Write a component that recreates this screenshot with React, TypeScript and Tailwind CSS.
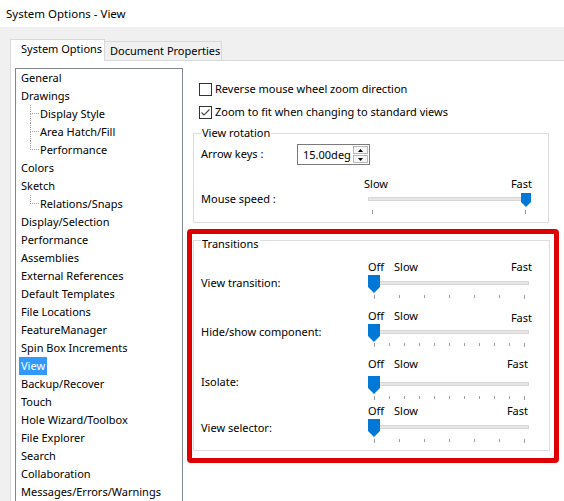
import React from 'react';

interface TreeItem {
  label: string;
  child?: boolean;
  last?: boolean;
  selected?: boolean;
}

const treeItems: TreeItem[] = [
  { label: 'General' },
  { label: 'Drawings' },
  { label: 'Display Style', child: true },
  { label: 'Area Hatch/Fill', child: true },
  { label: 'Performance', child: true, last: true },
  { label: 'Colors' },
  { label: 'Sketch' },
  { label: 'Relations/Snaps', child: true, last: true },
  { label: 'Display/Selection' },
  { label: 'Performance' },
  { label: 'Assemblies' },
  { label: 'External References' },
  { label: 'Default Templates' },
  { label: 'File Locations' },
  { label: 'FeatureManager' },
  { label: 'Spin Box Increments' },
  { label: 'View', selected: true },
  { label: 'Backup/Recover' },
  { label: 'Touch' },
  { label: 'Hole Wizard/Toolbox' },
  { label: 'File Explorer' },
  { label: 'Search' },
  { label: 'Collaboration' },
  { label: 'Messages/Errors/Warnings' },
];

interface TransitionRowDef {
  label: string;
  ticks: number;
  rowMt: string;
  labelPt: string;
  thumbMt: string;
  tickMt: string;
  fastCls: string;
}

const transitionRows: TransitionRowDef[] = [
  { label: 'View transition:', ticks: 7, rowMt: 'mt-0', labelPt: 'pt-[16px]', thumbMt: 'mt-[1px]', tickMt: 'mt-[2px]', fastCls: 'pr-[2px]' },
  { label: 'Hide/show component:', ticks: 11, rowMt: 'mt-[10px]', labelPt: 'pt-[16px]', thumbMt: 'mt-[1px]', tickMt: 'mt-[1px]', fastCls: 'pr-[2px] pt-[2px]' },
  { label: 'Isolate:', ticks: 11, rowMt: 'mt-[10px]', labelPt: 'pt-[18px]', thumbMt: 'mt-[5px]', tickMt: 'mt-[2px]', fastCls: 'pr-[6px]' },
  { label: 'View selector:', ticks: 7, rowMt: 'mt-[4px]', labelPt: 'pt-[17px]', thumbMt: 'mt-[1px]', tickMt: 'mt-[2px]', fastCls: 'pr-[6px]' },
];

const Thumb = ({ w, h, className }: { w: number; h: number; className: string }) => (
  <svg width={w} height={h} viewBox={`0 0 ${w} ${h}`} className={className}>
    <path d={`M0 0 H${w} V${h - w / 2} L${w / 2} ${h} L0 ${h - w / 2} Z`} fill="#0078d7" />
  </svg>
);

const Ticks = ({ count }: { count: number }) => (
  <>
    {Array.from({ length: count }).map((_, i) => (
      <span
        key={i}
        className={i === 0 || i === count - 1 ? 'h-[4px] w-px bg-[#a0a0a0]' : 'h-[3px] w-px bg-[#a0a0a0]'}
      />
    ))}
  </>
);

const Checkbox = ({ checked, label, mt }: { checked?: boolean; label: string; mt: string }) => (
  <div className={`ml-[12px] flex h-[16px] items-center gap-[3px] ${mt}`}>
    <span className="flex h-[13px] w-[13px] items-center justify-center border border-[#333333] bg-white">
      {checked && (
        <svg width="11" height="11" viewBox="0 0 11 11">
          <path d="M1.5 5.5 L4 8 L9.5 2.5" fill="none" stroke="#444444" strokeWidth="1.1" />
        </svg>
      )}
    </span>
    <span className="whitespace-nowrap leading-[16px]">{label}</span>
  </div>
);

const SpinArrow = ({ up }: { up?: boolean }) => (
  <svg width="5" height="3" viewBox="0 0 5 3">
    <path d={up ? 'M0 3 L2.5 0 L5 3 Z' : 'M0 0 L2.5 3 L5 0 Z'} fill="#000" />
  </svg>
);

const TransitionRow = ({ row }: { row: TransitionRowDef }) => (
  <div className={`flex ${row.rowMt}`}>
    <div className={`w-[172px] pl-[7px] leading-[14px] ${row.labelPt}`}>{row.label}</div>
    <div className="w-[168px]">
      <div className="flex h-[14px] pl-[2px] leading-[14px]">
        <span className="w-[26px]">Off</span>
        <span>Slow</span>
        <span className={`ml-auto ${row.fastCls}`}>Fast</span>
      </div>
      <div className={`relative h-[18px] ${row.thumbMt}`}>
        <div className="ml-[4px] w-[159px] pt-[6px]">
          <div className="h-[4px] border border-[#d6d6d6] bg-[#e7e7e7]" />
        </div>
        <Thumb w={12} h={18} className="absolute left-[2px] top-0" />
      </div>
      <div className={`ml-[8px] flex w-[151px] items-start justify-between ${row.tickMt}`}>
        <Ticks count={row.ticks} />
      </div>
    </div>
  </div>
);

export default function App() {
  return (
    <div className="flex h-[501px] w-[564px] flex-col overflow-hidden bg-[#f0f0f0] font-['Noto_Sans',sans-serif] text-[11px] text-black">
      {/* title bar */}
      <div className="flex h-[27px] shrink-0 items-center bg-white pl-[6px] text-[11.5px]">System Options - View</div>

      {/* tabs */}
      <div className="ml-[10px] mt-[12px] flex h-[21px] shrink-0 items-start whitespace-nowrap">
        <div className="relative z-10 h-[22px] w-[95px] border border-b-0 border-[#d9d9d9] bg-white pl-[10px] pt-[2px] leading-[14px]">
          System Options
        </div>
        <div className="mt-[2px] h-[19px] w-[117px] border border-l-0 border-b-0 border-[#d9d9d9] bg-[#f0f0f0] pl-[5px] pt-[2px] leading-[14px]">
          Document Properties
        </div>
      </div>

      {/* panel */}
      <div className="ml-[10px] flex flex-1 border-l border-t border-[#d9d9d9] bg-white">
        {/* tree */}
        <div className="ml-[4px] mt-[7px] h-[450px] w-[168px] shrink-0 border border-[#828790] bg-white">
          {treeItems.map((item, i) => (
            <div key={i} className="flex h-[18px] items-center whitespace-nowrap leading-[18px]">
              {item.child ? (
                <>
                  <span className="ml-[14px] flex h-full w-[9px] flex-col">
                    <span className="h-[9px] border-b border-l border-dotted border-[#a0a0a0]" />
                    <span className={item.last ? 'flex-1' : 'flex-1 border-l border-dotted border-[#a0a0a0]'} />
                  </span>
                  <span className="ml-px">{item.label}</span>
                </>
              ) : item.selected ? (
                <span className="ml-[3px] bg-[#3399ff] px-[2px] text-white">{item.label}</span>
              ) : (
                <span className="pl-[5px]">{item.label}</span>
              )}
            </div>
          ))}
        </div>

        {/* options */}
        <div className="flex flex-col pl-[4px]">
          <Checkbox label="Reverse mouse wheel zoom direction" mt="mt-[20px]" />
          <Checkbox checked label="Zoom to fit when changing to standard views" mt="mt-[7px]" />

          {/* view rotation */}
          <div className="relative ml-[6px] mt-[13px] w-[356px] border border-[#dcdcdc] pb-[8px]">
            <span className="absolute left-[7px] -top-[8px] bg-white px-px leading-[14px]">View rotation</span>
            <div className="mt-[10px] flex h-[21px] items-center">
              <span className="w-[103px] pl-[7px]">Arrow keys :</span>
              <div className="flex h-[21px] w-[73px] border border-[#7a7a7a] bg-white">
                <span className="flex-1 pl-[5px] leading-[19px]">15.00deg</span>
                <div className="flex w-[16px] flex-col gap-px py-px pr-px">
                  <span className="flex h-[8px] items-center justify-center border border-[#b9b9b9] bg-[#f7f7f7]">
                    <SpinArrow up />
                  </span>
                  <span className="flex h-[8px] items-center justify-center border border-[#b9b9b9] bg-[#f7f7f7]">
                    <SpinArrow />
                  </span>
                </div>
              </div>
            </div>
            <div className="mt-[12px] flex">
              <div className="w-[170px] pl-[7px] pt-[15px] leading-[14px]">Mouse speed :</div>
              <div className="w-[170px]">
                <div className="flex h-[14px] leading-[14px]">
                  <span>Slow</span>
                  <span className="ml-auto pr-[2px]">Fast</span>
                </div>
                <div className="relative mt-[2px] h-[14px]">
                  <div className="ml-[4px] w-[161px] pt-[4px]">
                    <div className="h-[4px] border border-[#d6d6d6] bg-[#e7e7e7]" />
                  </div>
                  <Thumb w={10} h={14} className="absolute left-[157px] top-0" />
                </div>
                <div className="ml-[8px] mt-[3px] flex w-[154px] items-start justify-between">
                  <span className="h-[4px] w-px bg-[#a0a0a0]" />
                  <span className="h-[4px] w-px bg-[#a0a0a0]" />
                </div>
              </div>
            </div>
          </div>

          {/* transitions, outlined in red */}
          <div className="mt-[6px] w-[372px] rounded-[4px] border-[5px] border-[#dc0000] pb-[7px] pl-px pt-[6px]">
            <div className="relative w-[357px] border border-[#dcdcdc] pb-[7px] pt-[19px]">
              <span className="absolute left-[7px] -top-[4px] bg-white px-px leading-[14px]">Transitions</span>
              {transitionRows.map((row) => (
                <TransitionRow key={row.label} row={row} />
              ))}
            </div>
          </div>
        </div>
      </div>
    </div>
  );
}
